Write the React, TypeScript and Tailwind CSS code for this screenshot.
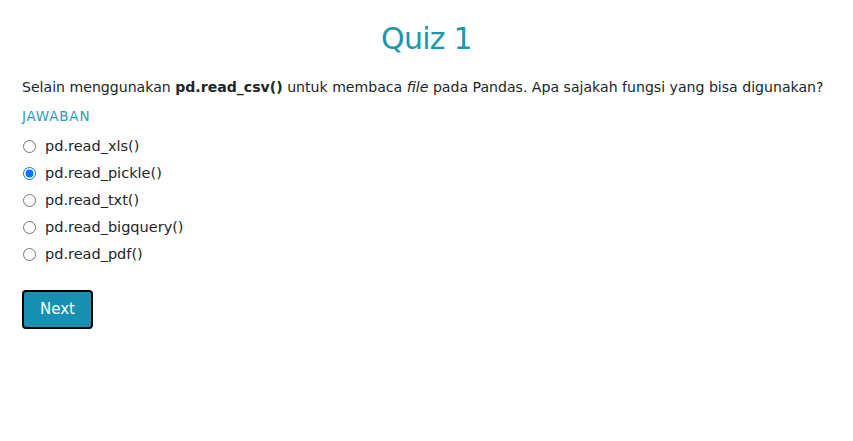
import React, { useState } from "react";

const options = [
  "pd.read_xls()",
  "pd.read_pickle()",
  "pd.read_txt()",
  "pd.read_bigquery()",
  "pd.read_pdf()",
];

export default function App() {
  const [picked, setPicked] = useState(1);

  return (
    <div
      className="w-full min-h-screen bg-white text-[#212529] px-[22px]"
      style={{ fontFamily: '"DejaVu Sans", sans-serif' }}
    >
      <h1 className="text-center text-[30px] leading-none text-[#2196aa] pt-[24px] pb-[23px] font-normal tracking-tight">
        Quiz 1
      </h1>
      <p className="text-[14.1px] leading-[20px] whitespace-nowrap">
        Selain menggunakan <b>pd.read_csv()</b> untuk membaca <i>file</i> pada
        Pandas. Apa sajakah fungsi yang bisa digunakan?
      </p>
      <div className="text-[13.5px] text-[#2d9bb5] mt-[9px] leading-[20px] tracking-[0.8px]">
        JAWABAN
      </div>
      <div className="mt-[7px] flex flex-col">
        {options.map((opt, i) => (
          <label
            key={opt}
            className="flex items-center h-[27px] text-[14.5px] gap-[9px]"
          >
            <input
              type="radio"
              name="quiz"
              checked={picked === i}
              onChange={() => setPicked(i)}
              className="w-[13px] h-[13px] m-0 ml-[1px] accent-[#0075ff]"
            />
            <span>{opt}</span>
          </label>
        ))}
      </div>
      <button className="mt-[22px] w-[71px] h-[39px] bg-[#1790b1] text-white text-[15px] rounded-[4px] border-2 border-black">
        Next
      </button>
    </div>
  );
}
